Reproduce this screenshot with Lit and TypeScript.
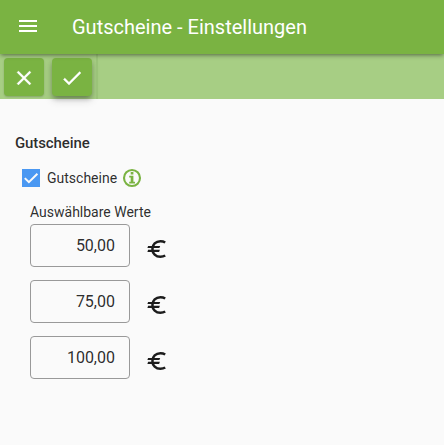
import { LitElement, html, css } from "lit";
import { customElement, state } from "lit/decorators.js";

@customElement("app-root")
export class AppRoot extends LitElement {
  @state() values = ["50,00", "75,00", "100,00"];

  static styles = css`
    :host {
      display: block;
      height: 100vh;
      overflow: hidden;
      background: #fafafa;
      color: rgba(0, 0, 0, 0.84);
      font-family: Roboto, "Liberation Sans", sans-serif;
      font-size: 14px;
    }
    * { box-sizing: border-box; }
    svg { display: block; fill: currentColor; flex: none; }
    .header {
      position: relative;
      z-index: 1;
      display: flex;
      align-items: center;
      gap: 32px;
      height: 54px;
      padding-left: 16px;
      background: #7ab342;
      color: #fff;
      box-shadow: 0 2px 4px -1px rgba(0, 0, 0, 0.4), 0 1px 6px rgba(0, 0, 0, 0.14);
    }
    .menu { margin-top: -2px; }
    .title {
      margin: 0;
      font-size: 20px;
      font-weight: 400;
      line-height: 24px;
    }
    .toolbar {
      display: flex;
      gap: 8px;
      height: 45px;
      padding: 4px 4px 0;
      background: #a7ce84;
    }
    .btn {
      display: flex;
      align-items: center;
      justify-content: center;
      flex: none;
      width: 40px;
      height: 38px;
      padding: 2px 0 0;
      border: 0;
      border-radius: 4px;
      background: #7ab342;
      color: #fff;
      box-shadow: 0 1px 2px rgba(0, 0, 0, 0.2);
    }
    .btn svg { stroke: currentColor; stroke-width: 0.3; }
    .raised {
      box-shadow: 0 3px 5px -1px rgba(0, 0, 0, 0.3), 0 4px 8px rgba(0, 0, 0, 0.16);
    }
    .divider {
      flex: none;
      width: 2px;
      height: 45px;
      margin: -4px 0 0 -4px;
      background: #9bc379;
    }
    .content { padding: 34px 15px 0; }
    .heading {
      margin: 0;
      font-size: 15px;
      font-weight: 500;
      letter-spacing: -0.1px;
      line-height: 20px;
    }
    .option {
      display: flex;
      align-items: center;
      height: 20px;
      margin: 15px 0 0 7px;
    }
    .box {
      width: 18px;
      height: 18px;
      margin-right: 7px;
      background: #4a98f2;
      color: #fafafa;
    }
    .info { margin-left: 4px; color: #7ab342; }
    .values { margin: 14px 0 0 15px; }
    .label { line-height: 20px; }
    .row {
      display: flex;
      align-items: center;
      gap: 15px;
      height: 43px;
      margin: 2px 0 13px;
    }
    .row + .row { margin-top: 0; }
    .field {
      width: 100px;
      height: 43px;
      padding: 0 14px 0 0;
      border: 1px solid #999;
      border-radius: 4px;
      line-height: 42px;
      font-size: 16px;
      text-align: right;
    }
    .euro { margin-top: 7px; color: #1c1c1c; }
  `;

  render() {
    return html`
      <header class="header">
        <svg class="menu" width="24" height="24" viewBox="0 0 24 24">
          <path d="M3 18h18v-2H3v2zm0-5h18v-2H3v2zm0-7v2h18V6H3z" />
        </svg>
        <h1 class="title">Gutscheine - Einstellungen</h1>
      </header>
      <nav class="toolbar">
        <button class="btn" aria-label="Abbrechen">
          <svg width="24" height="24" viewBox="0 0 24 24">
            <path d="M19 6.41 17.59 5 12 10.59 6.41 5 5 6.41 10.59 12 5 17.59 6.41 19 12 13.41 17.59 19 19 17.59 13.41 12z" />
          </svg>
        </button>
        <button class="btn raised" aria-label="Speichern">
          <svg width="24" height="24" viewBox="0 0 24 24">
            <path d="M9 16.17 4.83 12l-1.42 1.41L9 19 21 7l-1.41-1.41z" />
          </svg>
        </button>
        <span class="divider"></span>
      </nav>
      <main class="content">
        <h2 class="heading">Gutscheine</h2>
        <div class="option">
          <svg class="box" viewBox="0 0 18 18">
            <path d="M2.8 9.1 6.9 13.2 15.4 4.7" fill="none" stroke="currentColor" stroke-width="2" />
          </svg>
          <span>Gutscheine</span>
          <svg class="info" width="22" height="22" viewBox="0 0 22 22">
            <circle cx="11" cy="11" r="8" fill="none" stroke="currentColor" stroke-width="2.1" />
            <path d="M9.7 5h2.7v2.5H9.7zM8.2 8.8h4.2v6h1.6v1.7H8.2v-1.7h1.5v-4.3H8.2z" />
          </svg>
        </div>
        <section class="values">
          <div class="label">Auswählbare Werte</div>
          ${this.values.map(
            (value) => html`
              <div class="row">
                <div class="field">${value}</div>
                <svg class="euro" width="24" height="24" viewBox="0 0 24 24">
                  <path
                    d="M20.2 5.5C18.8 4.6 17.3 4.2 15.4 4.2C10.8 4.2 7.4 7.6 7.4 12S10.8 19.8 15.4 19.8C17.3 19.8 18.8 19.4 20.2 18.5"
                    fill="none"
                    stroke="currentColor"
                    stroke-width="2.5"
                  />
                  <path d="M3.1 8.9H15.2L14.4 11.1H2.4zM3.1 12.7H14.9L14.1 14.9H2.4z" />
                </svg>
              </div>
            `
          )}
        </section>
      </main>
    `;
  }
}
